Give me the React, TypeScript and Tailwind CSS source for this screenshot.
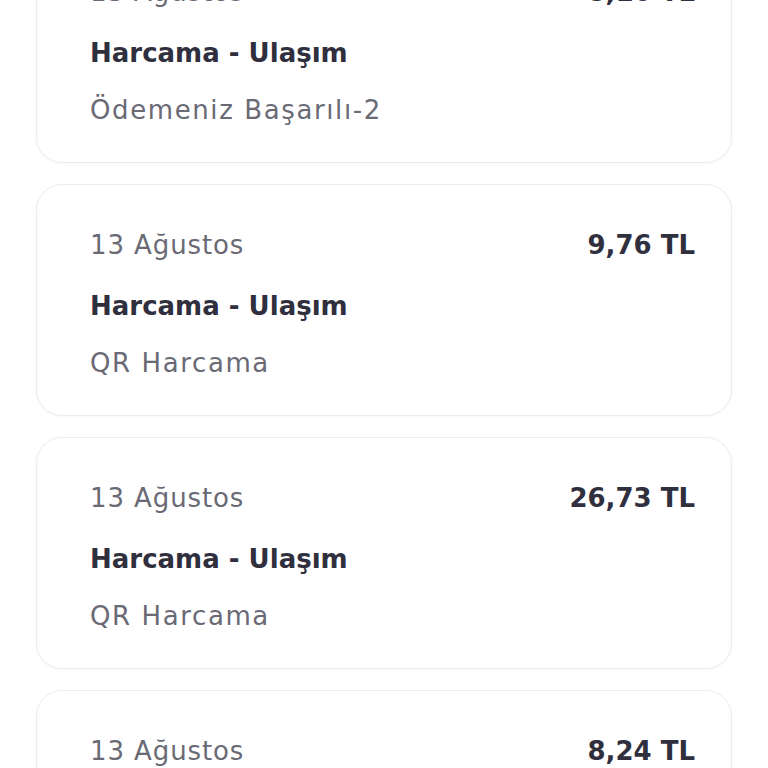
import React from "react";

const items = [
  { date: "13 Ağustos", amount: "8,16 TL", title: "Harcama - Ulaşım", sub: "Ödemeniz Başarılı-2" },
  { date: "13 Ağustos", amount: "9,76 TL", title: "Harcama - Ulaşım", sub: "QR Harcama" },
  { date: "13 Ağustos", amount: "26,73 TL", title: "Harcama - Ulaşım", sub: "QR Harcama" },
  { date: "13 Ağustos", amount: "8,24 TL", title: "Harcama - Ulaşım", sub: "QR Harcama" },
];

export default function App() {
  return (
    <div
      className="w-[768px] h-[768px] overflow-hidden bg-white"
      style={{ fontFamily: "'DejaVu Sans', 'Noto Sans', sans-serif" }}
    >
      <div className="flex flex-col gap-[21px] px-[36px] mt-[-69px]">
        {items.map((it, i) => (
          <div
            key={i}
            className="h-[232px] shrink-0 rounded-[26px] border border-[#ececef] bg-white pt-[42px] pl-[53px] pr-[36px] shadow-[0_1px_3px_rgba(0,0,0,0.03)]"
          >
            <div className="flex justify-between items-center h-[36px]">
              <span className="text-[26px] leading-[36px] tracking-[0.9px] text-[#6a6a75]">{it.date}</span>
              <span className="text-[26px] leading-[36px] font-bold text-[#2f2f3e]">{it.amount}</span>
            </div>
            <div className="mt-[25px] text-[26px] leading-[36px] font-bold text-[#2f2f3e]">{it.title}</div>
            <div className="mt-[21px] text-[26px] leading-[36px] tracking-[1.6px] text-[#6a6a75]">{it.sub}</div>
          </div>
        ))}
      </div>
    </div>
  );
}
